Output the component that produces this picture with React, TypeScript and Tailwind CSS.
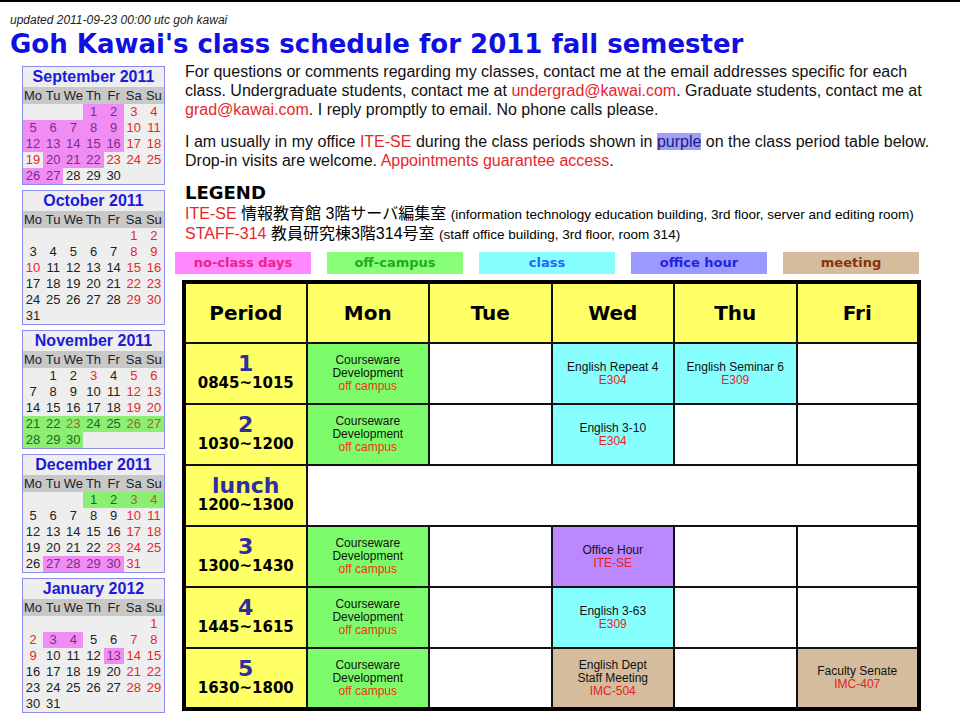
import React from 'react'

type Day = { d: number; red?: boolean; hl?: 'p' | 'g' } | null

const WEEK = ['Mo', 'Tu', 'We', 'Th', 'Fr', 'Sa', 'Su']

// build a month: offset = blank cells before day 1 (Mon based)
const month = (offset: number, days: number, reds: number[], pink: number[], green: number[]): Day[] => {
  const cells: Day[] = []
  for (let i = 0; i < offset; i++) cells.push(null)
  for (let d = 1; d <= days; d++) {
    const col = (offset + d - 1) % 7
    cells.push({
      d,
      red: col >= 5 || reds.includes(d),
      hl: pink.includes(d) ? 'p' : green.includes(d) ? 'g' : undefined,
    })
  }
  return cells
}

const range = (a: number, b: number) => Array.from({ length: b - a + 1 }, (_, i) => a + i)

const calendars = [
  { title: 'September 2011', cells: month(3, 30, [19, 23], [1, 2, ...range(5, 9), ...range(12, 16), 20, 21, 22, 26, 27], []) },
  { title: 'October 2011', cells: month(5, 31, [10], [], []) },
  { title: 'November 2011', cells: month(1, 30, [3, 23], [], range(21, 30)) },
  { title: 'December 2011', cells: month(3, 31, [23], range(27, 30), range(1, 4)) },
  { title: 'January 2012', cells: month(6, 31, [2, 9], [3, 4, 13], []) },
]

const dayClass = (c: Day) => {
  if (!c) return 'text-transparent'
  if (c.hl === 'p') return c.red ? 'bg-[#f08cf4] text-[#c8207a]' : 'bg-[#f08cf4] text-[#7a2c88]'
  if (c.hl === 'g') return c.red ? 'bg-[#8cee72] text-[#94701a]' : 'bg-[#8cee72] text-[#1d6a1d]'
  return c.red ? 'text-[#e8262a]' : 'text-[#222]'
}

const Calendar = ({ title, cells }: { title: string; cells: Day[] }) => (
  <div className="w-[143px] border border-[#8c8cec] bg-[#eeeeee]">
    <div className="h-[20px] text-center text-[16px] leading-[20px] font-bold text-[#1a1adc]">{title}</div>
    <div className="grid grid-cols-7 bg-[#c8c8c8] h-[17px] text-[13px] leading-[17px] text-[#222]">
      {WEEK.map((w) => (
        <div key={w} className="text-center">{w}</div>
      ))}
    </div>
    <div className="grid grid-cols-7 text-[13px] leading-[16px]">
      {cells.map((c, i) => (
        <div key={i} className={`h-[16px] text-center ${dayClass(c)}`}>{c ? c.d : '.'}</div>
      ))}
    </div>
  </div>
)

const legend = [
  { label: 'no-class days', cls: 'bg-[#ff88ff] text-[#ee2288]' },
  { label: 'off-campus', cls: 'bg-[#88ff77] text-[#22aa22]' },
  { label: 'class', cls: 'bg-[#88ffff] text-[#2266ff]' },
  { label: 'office hour', cls: 'bg-[#9999ff] text-[#2222dd]' },
  { label: 'meeting', cls: 'bg-[#d4bc9c] text-[#883311]' },
]

type Cell = { bg: string; lines: string[]; room: string } | null

const courseware: Cell = { bg: 'bg-[#7cfc6a]', lines: ['Courseware', 'Development'], room: 'off campus' }

const rows: { n: string; time: string; cells: Cell[] }[] = [
  {
    n: '1',
    time: '0845~1015',
    cells: [
      courseware,
      null,
      { bg: 'bg-[#88ffff]', lines: ['English Repeat 4'], room: 'E304' },
      { bg: 'bg-[#88ffff]', lines: ['English Seminar 6'], room: 'E309' },
      null,
    ],
  },
  { n: '2', time: '1030~1200', cells: [courseware, null, { bg: 'bg-[#88ffff]', lines: ['English 3-10'], room: 'E304' }, null, null] },
  { n: '3', time: '1300~1430', cells: [courseware, null, { bg: 'bg-[#bb88ff]', lines: ['Office Hour'], room: 'ITE-SE' }, null, null] },
  { n: '4', time: '1445~1615', cells: [courseware, null, { bg: 'bg-[#88ffff]', lines: ['English 3-63'], room: 'E309' }, null, null] },
  {
    n: '5',
    time: '1630~1800',
    cells: [
      courseware,
      null,
      { bg: 'bg-[#d4bc9c]', lines: ['English Dept', 'Staff Meeting'], room: 'IMC-504' },
      null,
      { bg: 'bg-[#d4bc9c]', lines: ['Faculty Senate'], room: 'IMC-407' },
    ],
  },
]

const heavy = "font-['DejaVu_Sans',sans-serif] font-bold"

const PeriodCell = ({ n, time }: { n: string; time: string }) => (
  <td className="border-2 border-[#111] bg-[#ffff66] text-center align-middle">
    <div className={`text-[22px] leading-[20px] text-[#2e2e9c] ${heavy}`}>{n}</div>
    <div className={`text-[15px] leading-[19px] text-black ${heavy}`}>{time}</div>
  </td>
)

const ClassCell = ({ c }: { c: Cell }) => (
  <td className={`border-2 border-[#111] text-center align-middle text-[12px] leading-[13px] ${c ? c.bg : 'bg-white'}`}>
    {c && (
      <>
        {c.lines.map((l) => (
          <div key={l} className="text-[#111]">{l}</div>
        ))}
        <div className={c.room === 'off campus' ? 'text-[#ee3311]' : 'text-[#e82222]'}>{c.room}</div>
      </>
    )}
  </td>
)

export default function App() {
  return (
    <div className="w-[960px] h-[720px] overflow-hidden bg-white border-t-2 border-black font-['Liberation_Sans','Noto_Sans_CJK_JP',sans-serif] text-[#111]">
      <div className="pl-[10px] pt-[11px]">
        <div className="text-[12px] leading-[15px] italic text-[#222]">updated 2011-09-23 00:00 utc goh kawai</div>
        <h1 className={`text-[26px] leading-[32px] text-[#1010e0] ${heavy}`}>Goh Kawai's class schedule for 2011 fall semester</h1>
      </div>

      <div className="flex pl-[22px] pt-[2px]">
        {/* calendars */}
        <div className="flex flex-col gap-[5px] pt-[4px]">
          {calendars.map((c) => (
            <Calendar key={c.title} title={c.title} cells={c.cells} />
          ))}
        </div>

        {/* main */}
        <div className="ml-[10px] flex flex-col">
          <div className="pl-[10px] text-[16px] leading-[19px] whitespace-nowrap">
            <p>
              For questions or comments regarding my classes, contact me at the email addresses specific for each
              <br />
              class. Undergraduate students, contact me at <span className="text-[#e8262a]">undergrad@kawai.com</span>. Graduate students, contact me at
              <br />
              <span className="text-[#e8262a]">grad@kawai.com</span>. I reply promptly to email. No phone calls please.
            </p>
            <p className="mt-[13px]">
              I am usually in my office <span className="text-[#e8262a]">ITE-SE</span> during the class periods shown in{' '}
              <span className="bg-[#a0a0f8] text-[#1a1a80]">purple</span> on the class period table below.
              <br />
              Drop-in visits are welcome. <span className="text-[#e8262a]">Appointments guarantee access</span>.
            </p>
            <div className={`mt-[12px] text-[18px] leading-[22px] text-black ${heavy}`}>LEGEND</div>
            <div className="text-black">
              <span className="text-[#e8262a]">ITE-SE</span> 情報教育館 3階サーバ編集室{' '}
              <span className="text-[13.5px]">(information technology education building, 3rd floor, server and editing room)</span>
            </div>
            <div className="text-black">
              <span className="text-[#e8262a]">STAFF-314</span> 教員研究棟3階314号室{' '}
              <span className="text-[13.5px]">(staff office building, 3rd floor, room 314)</span>
            </div>
          </div>

          <div className="mt-[8px] flex gap-4">
            {legend.map((l) => (
              <div key={l.label} className={`w-[136px] h-[22px] flex items-center justify-center text-[13px] ${heavy} ${l.cls}`}>
                {l.label}
              </div>
            ))}
          </div>

          <table className="mt-[6px] ml-[7px] w-[739px] table-fixed border-collapse border-[4px] border-black">
            <thead>
              <tr className="h-[61px] bg-[#ffff66]">
                {['Period', 'Mon', 'Tue', 'Wed', 'Thu', 'Fri'].map((h) => (
                  <th key={h} className={`border-2 border-[#111] text-[20px] text-black ${heavy}`}>
                    {h}
                  </th>
                ))}
              </tr>
            </thead>
            <tbody>
              {rows.slice(0, 2).map((r) => (
                <tr key={r.n} className="h-[61px]">
                  <PeriodCell n={r.n} time={r.time} />
                  {r.cells.map((c, i) => (
                    <ClassCell key={i} c={c} />
                  ))}
                </tr>
              ))}
              <tr className="h-[61px]">
                <PeriodCell n="lunch" time="1200~1300" />
                <td colSpan={5} className="border-2 border-[#111] bg-white" />
              </tr>
              {rows.slice(2).map((r) => (
                <tr key={r.n} className="h-[61px]">
                  <PeriodCell n={r.n} time={r.time} />
                  {r.cells.map((c, i) => (
                    <ClassCell key={i} c={c} />
                  ))}
                </tr>
              ))}
            </tbody>
          </table>
        </div>
      </div>
    </div>
  )
}
